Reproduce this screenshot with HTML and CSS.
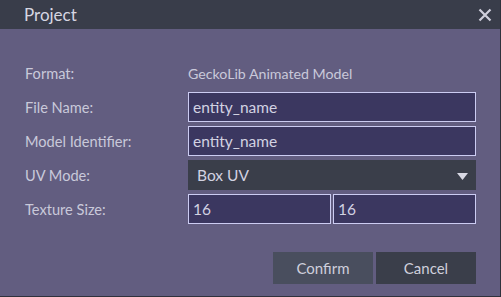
FILE: index.html
```html
<!DOCTYPE html>
<html>
<head>
    <title>Project</title>
    <link rel="stylesheet" href="styles.css">
</head>
<body>
    <div class="dialog">
        <div class="title-bar">
            <span class="title">Project</span>
            <span class="close">
                <svg width="14" height="14" viewBox="0 0 14 14">
                    <path d="M1.5 1.5 L12.5 12.5 M12.5 1.5 L1.5 12.5" stroke="#cfcfdc" stroke-width="2.2" fill="none"/>
                </svg>
            </span>
        </div>

        <div class="form">
            <div class="row">
                <label>Format:</label>
                <div class="field text-value">GeckoLib Animated Model</div>
            </div>
            <div class="row">
                <label>File Name:</label>
                <div class="field"><div class="input">entity_name</div></div>
            </div>
            <div class="row">
                <label>Model Identifier:</label>
                <div class="field"><div class="input">entity_name</div></div>
            </div>
            <div class="row">
                <label>UV Mode:</label>
                <div class="field">
                    <div class="select">
                        <span>Box UV</span>
                        <svg width="11" height="7" viewBox="0 0 11 7"><path d="M0 0 H11 L5.5 7 Z" fill="#d8d8e4"/></svg>
                    </div>
                </div>
            </div>
            <div class="row">
                <label>Texture Size:</label>
                <div class="field pair">
                    <div class="input">16</div>
                    <div class="input">16</div>
                </div>
            </div>
        </div>

        <div class="buttons">
            <button class="confirm">Confirm</button>
            <button class="cancel">Cancel</button>
        </div>
    </div>
</body>
</html>
```

FILE: styles.css
```css
body {
    margin: 0;
    padding: 0;
    background-color: #2f323d;
    font-family: Lato, "Open Sans", sans-serif;
}

.dialog {
    width: 500px;
    height: 296px;
    background-color: #625d80;
    display: flex;
    flex-direction: column;
}

.title-bar {
    height: 29px;
    background-color: #393d4a;
    display: flex;
    align-items: center;
    justify-content: space-between;
    padding: 0 8px 0 24px;
}

.title {
    font-size: 17px;
    color: #d6d6e2;
}

.close {
    display: flex;
    margin-top: 1px;
}

.form {
    padding: 29px 24px 0 25px;
    display: flex;
    flex-direction: column;
    gap: 4px;
}

.row {
    display: flex;
    align-items: center;
    height: 30px;
}

.row label {
    width: 163px;
    font-size: 14.6px;
    color: #c9c9da;
}

.field {
    width: 288px;
}

.text-value {
    font-size: 14.2px;
    color: #c9c9da;
}

.input {
    box-sizing: border-box;
    height: 30px;
    background-color: #3b3760;
    border: 1px solid #ccccf2;
    padding: 0 4px;
    display: flex;
    align-items: center;
    font-size: 15.5px;
    color: #d2d2e2;
}

.pair {
    display: flex;
    gap: 2px;
}

.pair .input {
    flex: 1;
}

.select {
    box-sizing: border-box;
    height: 30px;
    background-color: #3a3e4a;
    padding: 0 8px 0 9px;
    display: flex;
    align-items: center;
    justify-content: space-between;
    font-size: 15.5px;
    color: #d2d2e2;
}

.select svg {
    margin-top: 2px;
}

.buttons {
    margin-top: 28px;
    padding-right: 24px;
    display: flex;
    justify-content: flex-end;
    gap: 3px;
}

.buttons button {
    width: 100px;
    height: 32px;
    border: none;
    font-family: Lato, "Open Sans", sans-serif;
    font-size: 15px;
    color: #cfcfdc;
}

.confirm {
    background-color: #494e5e;
}

.cancel {
    background-color: #3a3e4a;
}
```
